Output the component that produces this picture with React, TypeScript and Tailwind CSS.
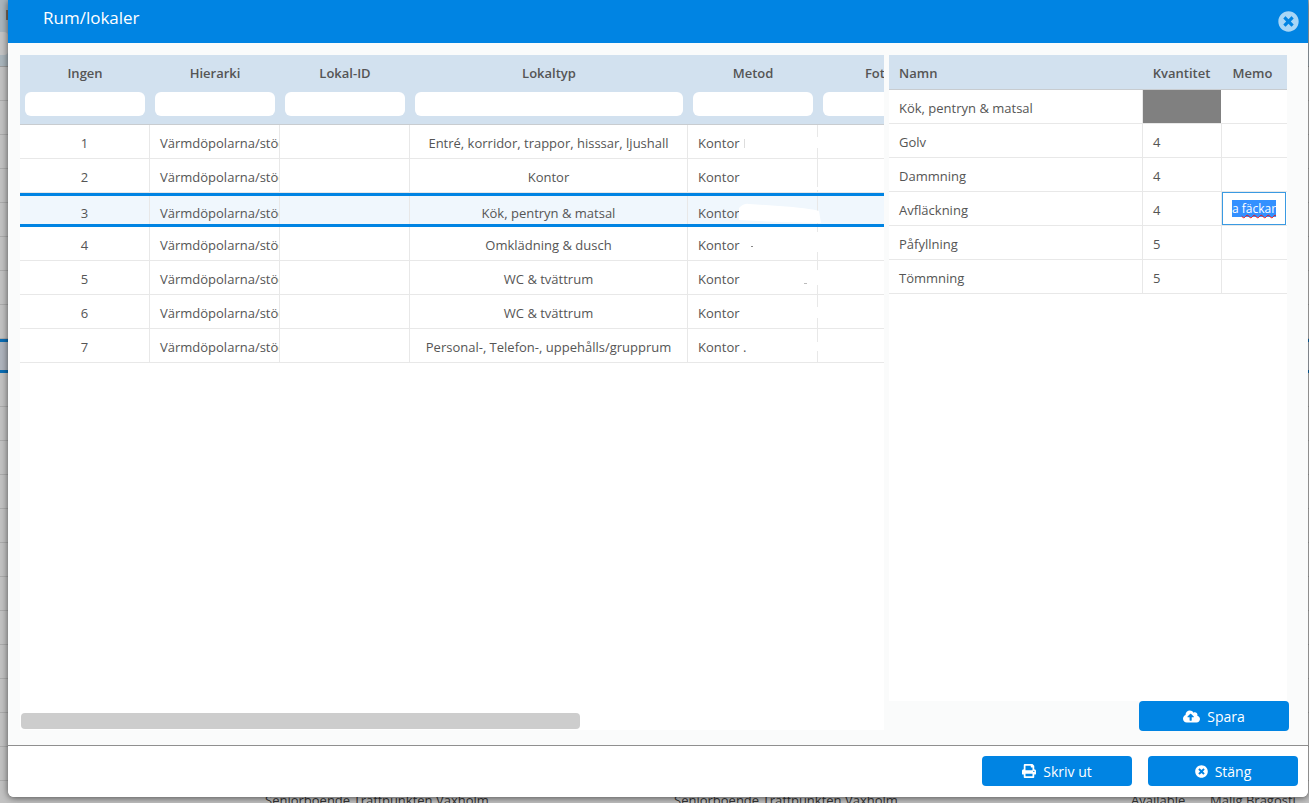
import React from 'react';
import { FaCloudUploadAlt, FaPrint, FaTimesCircle } from 'react-icons/fa';

const leftRows = [
  { id: 1, type: 'Entré, korridor, trappor, hisssar, ljushall', method: 'Kontor', gap: 'top-[12px] h-[11px]', mark: 'left-[56px] top-[14px] w-[1px] h-[9px] bg-[#dddddd]' },
  { id: 2, type: 'Kontor', method: 'Kontor', gap: 'top-[28px] h-[3px]' },
  { id: 3, type: 'Kök, pentryn & matsal', method: 'Kontor', selected: true },
  { id: 4, type: 'Omklädning & dusch', method: 'Kontor', gap: 'top-[5px] h-[20px]', mark: 'left-[63px] top-[19px] w-[2px] h-[1px] bg-[#888888]' },
  { id: 5, type: 'WC & tvättrum', method: 'Kontor', gap: 'top-[9px] h-[15px]', mark: 'left-[116px] top-[22px] w-[3px] h-[1px] bg-[#bbbbbb]' },
  { id: 6, type: 'WC & tvättrum', method: 'Kontor', gap: 'top-[12px] h-[11px]' },
  { id: 7, type: 'Personal-, Telefon-, uppehålls/grupprum', method: 'Kontor .', gap: 'top-[13px] h-[9px]' },
];

const rightRows = [
  { name: 'Kök, pentryn & matsal', qty: '', grey: true },
  { name: 'Golv', qty: '4' },
  { name: 'Dammning', qty: '4' },
  { name: 'Avfläckning', qty: '4', editing: true },
  { name: 'Påfyllning', qty: '5' },
  { name: 'Tömmning', qty: '5' },
];

const filterColumns = [
  { label: 'Ingen', width: 'w-[130px]' },
  { label: 'Hierarki', width: 'w-[130px]' },
  { label: 'Lokal-ID', width: 'w-[130px]' },
  { label: 'Lokaltyp', width: 'w-[278px]' },
  { label: 'Metod', width: 'w-[130px]' },
  { label: 'Foton', width: 'w-[130px]' },
];

const PageBehind: React.FC = () => (
  <div className="flex flex-col h-[803px] bg-[#c2c2c2]">
    <div className="h-[67px] shrink-0 bg-[#a9b5bc] border-b border-[#9a9a9a] pt-[10px]">
      <div className="w-[5px] h-[10px] ml-[6px] bg-[#7a6a5a]" />
      <div className="w-[8px] h-[23px] mt-[12px] rounded-r bg-[#c4c4c4]" />
    </div>
    {Array.from({ length: 21 }).map((_, i) => (
      <div
        key={i}
        className={
          i === 8
            ? 'h-[34px] shrink-0 bg-[#aeb4bd] border-y-[3px] border-[#0a6cb3]'
            : 'h-[34px] shrink-0 border-b border-[#ababab]'
        }
      />
    ))}
    <div className="flex text-[13px] leading-[34px] pt-[2px] text-[#333] whitespace-nowrap h-[34px] shrink-0">
      <span className="ml-[265px] w-[409px]">Seniorboende Träffpunkten Vaxholm</span>
      <span className="w-[457px]">Seniorboende Träffpunkten Vaxholm</span>
      <span className="w-[79px]">Available</span>
      <span>Mälig Bragosti</span>
    </div>
  </div>
);

export default function App() {
  return (
    <div className="relative w-[1309px] h-[803px] overflow-hidden font-['Open_Sans',sans-serif] text-[13px] text-[#555]">
      <PageBehind />

      <div className="absolute left-2 top-0 w-[1300px] h-[797px] flex flex-col rounded-b-md overflow-hidden bg-white shadow-[0_1px_7px_rgba(0,0,0,0.6)]">
        <div className="h-[43px] shrink-0 bg-[#0084e3] flex items-start justify-between pl-[35px] pr-[9px]">
          <span className="text-white text-[17px] leading-[36px]">Rum/lokaler</span>
          <span className="w-[21px] h-[21px] mt-[11px] rounded-full bg-[#0084e3]">
            <FaTimesCircle className="w-[21px] h-[21px] text-[#a8d6f6]" />
          </span>
        </div>

        <div className="h-[703px] shrink-0 bg-[#fafbfb] border-b border-[#8f8f8f] pl-3 pt-3 flex gap-[5px]">
          <div className="w-[864px] h-[675px] bg-white overflow-hidden flex flex-col relative">
            <div className="flex w-[928px] shrink-0 h-[70px] bg-[#d2e1ef] border-b border-[#c8ccd0]">
              {filterColumns.map((c) => (
                <div key={c.label} className={`${c.width} shrink-0 px-[5px] flex flex-col`}>
                  <div className="h-[37px] leading-[37px] text-center font-semibold text-[#555]">{c.label}</div>
                  <div className="h-[24px] rounded-md bg-white" />
                </div>
              ))}
            </div>
            {leftRows.map((r) => (
              <div
                key={r.id}
                className={
                  r.selected
                    ? 'flex w-[928px] h-[34px] shrink-0 leading-[35px] bg-[#f0f7fd] border-y-[3px] border-[#0084e3]'
                    : 'flex w-[928px] h-[34px] shrink-0 leading-[37px] border-b border-[#e8e8e8]'
                }
              >
                <div className="w-[130px] shrink-0 border-r border-[#e8e8e8] text-center">{r.id}</div>
                <div className="w-[130px] shrink-0 border-r border-[#e8e8e8] pl-[10px] overflow-hidden whitespace-nowrap">Värmdöpolarna/stöd</div>
                <div className="w-[130px] shrink-0 border-r border-[#e8e8e8]" />
                <div className="w-[278px] shrink-0 border-r border-[#e8e8e8] text-center whitespace-nowrap">{r.type}</div>
                <div className="w-[130px] shrink-0 border-r border-[#e8e8e8] pl-[10px] relative">
                  {r.method}
                  {r.gap && <span className={`absolute right-[-1px] w-[2px] bg-white ${r.gap}`} />}
                  {r.mark && <span className={`absolute ${r.mark}`} />}
                  {r.selected && (
                    <svg viewBox="0 0 82 21" className="absolute left-[51px] top-[7px] w-[82px] h-[21px]">
                      <path d="M0 5Q5 0 10 1L40 3Q70 5 80 8L82 20L40 19L0 17Z" fill="white" />
                    </svg>
                  )}
                </div>
                <div className="w-[130px] shrink-0" />
              </div>
            ))}
            <div className="absolute left-[1px] bottom-[1px] w-[559px] h-[16px] rounded bg-[#cdcdcd]" />
          </div>

          <div className="w-[398px] h-[646px] bg-white flex flex-col">
            <div className="flex h-[35px] shrink-0 bg-[#d2e1ef] border-b border-[#c8ccd0] font-semibold leading-[37px]">
              <div className="w-[254px] pl-[10px]">Namn</div>
              <div className="w-[77px] text-center">Kvantitet</div>
              <div className="w-[65px] text-center">Memo</div>
            </div>
            {rightRows.map((r) => (
              <div key={r.name} className="flex h-[34px] shrink-0 border-b border-[#e8e8e8] leading-[37px]">
                <div className="w-[254px] shrink-0 border-r border-[#e8e8e8] pl-[10px]">{r.name}</div>
                <div className={r.grey ? 'w-[79px] shrink-0 bg-[#808080] border-r border-white' : 'w-[79px] shrink-0 border-r border-[#e8e8e8] pl-[10px]'}>{r.qty}</div>
                <div className="w-[65px] shrink-0">
                  {r.editing && (
                    <div className="w-[64px] h-[33px] border border-[#3a9ae2] flex items-center justify-center text-[12px] leading-[17px]">
                      <span className="bg-[#3390ff] text-white">
                        a <span className="underline decoration-wavy decoration-[#ee1111] decoration-1">fäckar</span>
                      </span>
                    </div>
                  )}
                </div>
              </div>
            ))}
          </div>
        </div>

        <div className="flex-1 bg-white flex justify-end items-start gap-4 pt-[10px] pr-[10px]">
          <button className="w-[150px] h-[30px] rounded bg-[#0084e3] text-white text-[14px] flex items-center justify-center gap-[7px]">
            <FaPrint className="w-[14px] h-[14px]" />
            Skriv ut
          </button>
          <button className="w-[150px] h-[30px] rounded bg-[#0084e3] text-white text-[14px] flex items-center justify-center gap-[7px]">
            <FaTimesCircle className="w-[13px] h-[13px]" />
            Stäng
          </button>
        </div>

        <button className="absolute left-[1131px] top-[701px] w-[150px] h-[30px] rounded bg-[#0084e3] text-white text-[14px] flex items-center justify-center gap-[7px]">
          <FaCloudUploadAlt className="w-[17px] h-[17px]" />
          Spara
        </button>
      </div>
    </div>
  );
}
